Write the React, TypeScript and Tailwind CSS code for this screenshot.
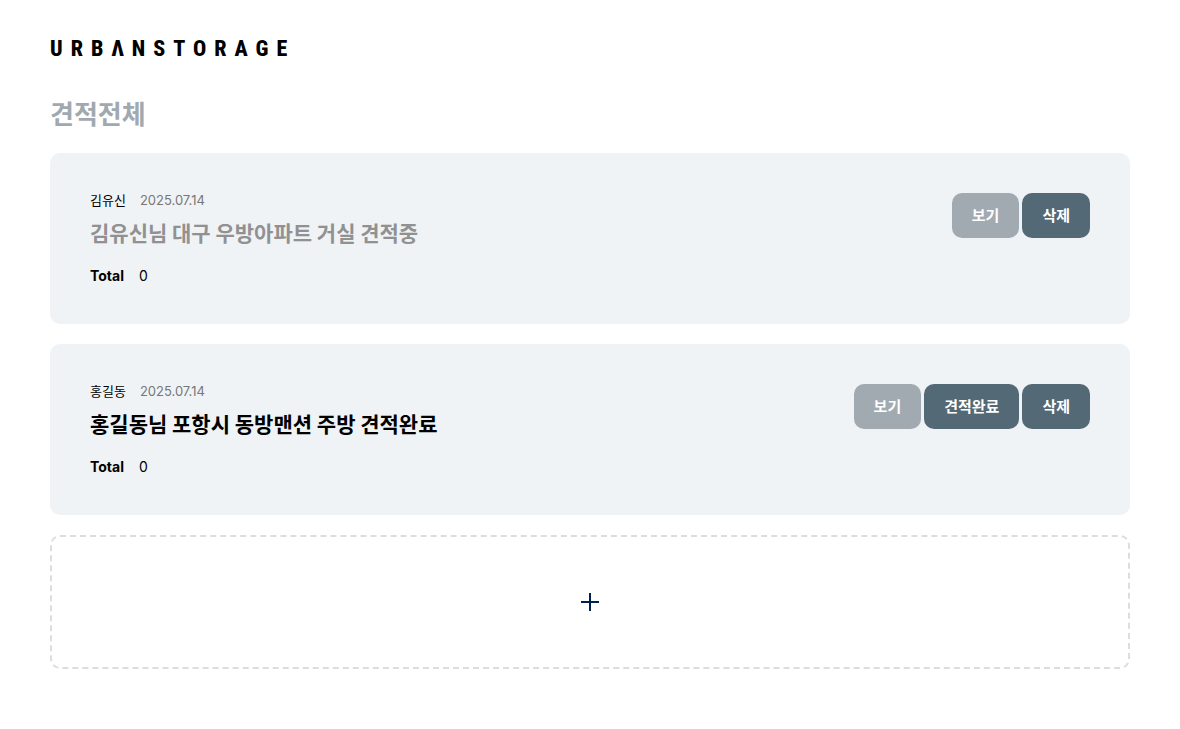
import React from 'react';
import clsx from 'clsx';

type Estimate = {
    id: number;
    customer: string;
    date: string;
    title: string;
    total: number;
    done: boolean;
};

const estimates: Estimate[] = [
    { id: 1, customer: '김유신', date: '2025.07.14', title: '김유신님 대구 우방아파트 거실 견적중', total: 0, done: false },
    { id: 2, customer: '홍길동', date: '2025.07.14', title: '홍길동님 포항시 동방맨션 주방 견적완료', total: 0, done: true },
];

const ActionButton: React.FC<{ muted?: boolean; children: React.ReactNode }> = ({ muted, children }) => (
    <button
        type="button"
        className={clsx(
            'h-[45px] px-5 pt-0.5 rounded-[10px] text-[15px] font-bold text-white cursor-pointer',
            muted ? 'bg-[#a2aab1]' : 'bg-[#536976]'
        )}
    >
        {children}
    </button>
);

const EstimateCard: React.FC<{ estimate: Estimate }> = ({ estimate }) => (
    <li className="flex items-start justify-between rounded-[10px] bg-[#eff3f6] p-10">
        <div>
            <div className="flex gap-[14px] text-[13px] leading-[15px]">
                <span>{estimate.customer}</span>
                <span className="text-[#777777]">{estimate.date}</span>
            </div>
            <h2
                className={clsx(
                    "mt-[9px] mb-5 font-['Noto_Sans_CJK_KR',sans-serif] text-[21px] leading-[30px] font-bold",
                    estimate.done ? 'text-black' : 'text-[#919191]'
                )}
            >
                {estimate.title}
            </h2>
            <div className="flex gap-[15px] text-[14px] leading-[17px]">
                <strong className="font-bold">Total</strong>
                <span>{estimate.total}</span>
            </div>
        </div>
        <div className="flex gap-[3px]">
            <ActionButton muted>보기</ActionButton>
            {estimate.done && <ActionButton>견적완료</ActionButton>}
            <ActionButton>삭제</ActionButton>
        </div>
    </li>
);

export default function App() {
    return (
        <div className="bg-white px-[50px] pt-[37px] pb-[60px] font-['Inter','Noto_Sans_CJK_KR',sans-serif] text-black">
            <header>
                <a
                    href="#"
                    aria-label="URBANSTORAGE"
                    className="block font-['Roboto_Condensed','Roboto',sans-serif] text-[22px] leading-6 font-extrabold tracking-[8px] whitespace-nowrap"
                >
                    URBΛNSTORAGE
                </a>
            </header>

            <main>
                <h1 className="mt-[34px] mb-[18px] text-[26px] leading-10 font-bold text-[#a1a9b0]">견적전체</h1>

                <ul className="flex flex-col gap-5">
                    {estimates.map(estimate => (
                        <EstimateCard key={estimate.id} estimate={estimate} />
                    ))}
                </ul>

                <button
                    type="button"
                    aria-label="견적 추가"
                    className="mt-5 flex h-[134px] w-full items-center justify-center rounded-[10px] border-2 border-dashed border-[#dddddd] cursor-pointer"
                >
                    <svg width="18" height="18" viewBox="0 0 18 18" fill="none" stroke="#00204f" strokeWidth="2" aria-hidden="true">
                        <path d="M9 0v18M0 9h18" />
                    </svg>
                </button>
            </main>
        </div>
    );
}
